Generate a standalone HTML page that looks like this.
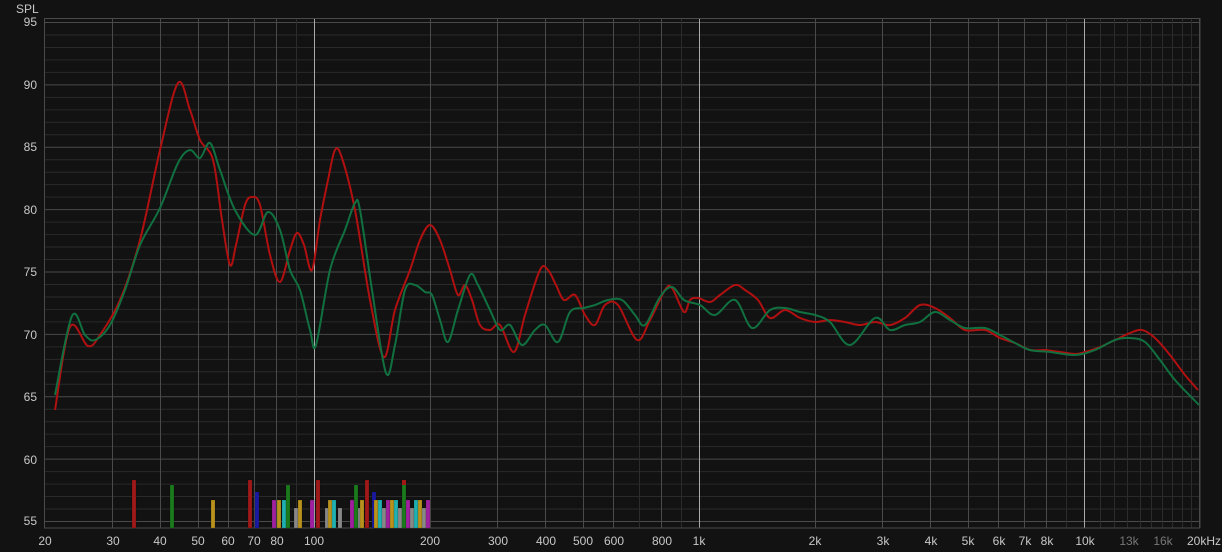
<!DOCTYPE html>
<html><head><meta charset="utf-8"><style>
html,body{margin:0;padding:0;background:#121212;}
body{width:1222px;height:552px;position:relative;overflow:hidden;font-family:"Liberation Sans",sans-serif;}
.l{position:absolute;color:#c8c8c8;font-size:12px;line-height:12px;}
.y{right:1185px;text-align:right;}
.x{top:535px;transform:translateX(-50%);}
.g{color:#777;}
svg{position:absolute;left:0;top:0;}
</style></head><body>
<svg id="s" width="1222" height="552"></svg>
<div class="l" style="left:16px;top:3px;font-size:12px">SPL</div>
<div class="l y" style="top:16px">95</div>
<div class="l y" style="top:79px">90</div>
<div class="l y" style="top:141px">85</div>
<div class="l y" style="top:204px">80</div>
<div class="l y" style="top:266px">75</div>
<div class="l y" style="top:329px">70</div>
<div class="l y" style="top:391px">65</div>
<div class="l y" style="top:454px">60</div>
<div class="l y" style="top:515px">55</div>
<div class="l x" style="left:45px">20</div>
<div class="l x" style="left:113px">30</div>
<div class="l x" style="left:160px">40</div>
<div class="l x" style="left:198px">50</div>
<div class="l x" style="left:228px">60</div>
<div class="l x" style="left:254px">70</div>
<div class="l x" style="left:277px">80</div>
<div class="l x" style="left:314px">100</div>
<div class="l x" style="left:430px">200</div>
<div class="l x" style="left:498px">300</div>
<div class="l x" style="left:546px">400</div>
<div class="l x" style="left:583px">500</div>
<div class="l x" style="left:614px">600</div>
<div class="l x" style="left:662px">800</div>
<div class="l x" style="left:699px">1k</div>
<div class="l x" style="left:815px">2k</div>
<div class="l x" style="left:883px">3k</div>
<div class="l x" style="left:931px">4k</div>
<div class="l x" style="left:968px">5k</div>
<div class="l x" style="left:999px">6k</div>
<div class="l x" style="left:1025px">7k</div>
<div class="l x" style="left:1047px">8k</div>
<div class="l x" style="left:1085px">10k</div>
<div class="l x g" style="left:1129px">13k</div>
<div class="l x g" style="left:1163px">16k</div>
<div class="l x" style="left:1204px">20kHz</div>
<script>
var s=document.getElementById('s'),ns='http://www.w3.org/2000/svg',h='';
function X(f){return 44.5+(Math.log10(f)-Math.log10(20))*385;}
function Y(d){return 521.5-(d-55)*12.475;}
// horizontal grid
for(var d=55;d<=95;d++){var y=Y(d);h+='<line x1="44" x2="1200" y1="'+y+'" y2="'+y+'" stroke="'+(d%5==0?'#4a4a4a':'#2a2a2a')+'" stroke-width="1"/>';}
// vertical grid
var fs=[],maj=[20,30,40,50,60,70,80,200,300,400,500,600,800,2000,3000,4000,5000,6000,7000,8000];
for(var f=30;f<100;f+=10)fs.push(f);for(f=200;f<1000;f+=100)fs.push(f);for(f=2000;f<10000;f+=1000)fs.push(f);for(f=11000;f<=20000;f+=1000)fs.push(f);
fs.forEach(function(f){var x=Math.round(X(f))+.5;var c=maj.indexOf(f)>=0?'#4a4a4a':'#2c2c2c';h+='<line x1="'+x+'" x2="'+x+'" y1="18" y2="528" stroke="'+c+'"/>';});
[100,1000,10000].forEach(function(f){var x=Math.round(X(f))+.5;h+='<line x1="'+x+'" x2="'+x+'" y1="18" y2="528" stroke="#aaa"/>';});
h+='<rect x="44.5" y="18.5" width="1155" height="509.5" fill="none" stroke="#4a4a4a"/>';
// bars
var B=[[132,'#a01818',480],[170,'#1b7a1b',485],[211,'#b8921c',500],[248,'#a01818',480],[255,'#1a1aa0',492],
[272,'#a020a0',500],[277,'#b8921c',500],[282,'#20b0b0',500],[286,'#1b7a1b',485],[294,'#888',508],[298,'#b8921c',500],
[310,'#a020a0',500],[316,'#a01818',480],[325,'#888',508],[328,'#b8921c',500],[332,'#20b0b0',500],[338,'#888',508],
[350,'#a020a0',500],[354,'#1b7a1b',485],[358,'#888',508],[360,'#b8921c',500],[365,'#a01818',480],[372,'#1a1aa0',492],
[374,'#b8921c',500],[378,'#20b0b0',500],[382,'#888',508],[386,'#a020a0',500],[390,'#b8921c',500],[394,'#20b0b0',500],[398,'#888',508],
[402,'#1b7a1b',480],[406,'#a020a0',500],[410,'#888',508],[414,'#20b0b0',500],[418,'#b8921c',500],[422,'#888',508],[426,'#a020a0',500]];
B.forEach(function(b){h+='<rect x="'+b[0]+'" y="'+b[2]+'" width="4" height="'+(528-b[2])+'" fill="'+b[1]+'" stroke="rgba(0,0,0,.3)" stroke-width=".5"/>';});
h+='<rect x="402" y="480" width="4" height="5" fill="#a01818"/>';
function cr(p){var d='M'+p[0][0]+' '+p[0][1];for(var i=0;i<p.length-1;i++){var a=p[i-1]||p[i],b=p[i],c=p[i+1],e=p[i+2]||c;
d+=' C'+(b[0]+(c[0]-a[0])/6).toFixed(1)+' '+(b[1]+(c[1]-a[1])/6).toFixed(1)+' '+(c[0]-(e[0]-b[0])/6).toFixed(1)+' '+(c[1]-(e[1]-b[1])/6).toFixed(1)+' '+c[0]+' '+c[1];}return d;}
var R=[[55,410],[70,327],[88,346],[100,335],[120,300],[140,240],[160,150],[178,83],[190,110],[200,140],[213,160],[222,220],[230,265],[236,245],[245,205],[252,197],[260,205],[270,255],[280,282],[290,250],[297,233],[304,245],[312,270],[320,220],[328,180],[335,150],[342,158],[355,210],[370,300],[384,357],[395,310],[410,270],[420,240],[430,225],[440,240],[450,270],[458,295],[465,285],[472,300],[480,325],[490,330],[500,325],[514,352],[525,315],[540,270],[548,270],[556,285],[564,300],[575,295],[585,315],[595,325],[605,305],[618,305],[637,340],[650,320],[665,290],[672,288],[684,312],[690,300],[698,298],[710,302],[720,295],[735,285],[745,290],[758,300],[770,318],[785,310],[800,318],[815,322],[830,320],[845,322],[860,325],[875,322],[890,325],[905,318],[920,305],[935,308],[950,318],[965,330],[985,330],[1000,338],[1015,343],[1030,350],[1045,350],[1060,352],[1075,354],[1085,352],[1100,347],[1115,340],[1130,333],[1142,330],[1155,338],[1170,355],[1185,375],[1198,390]];
var G=[[55,395],[72,316],[85,335],[95,340],[110,325],[125,290],[140,245],[160,208],[178,163],[190,150],[200,158],[210,143],[220,170],[235,210],[255,235],[268,212],[280,230],[290,270],[300,290],[310,330],[316,345],[330,270],[345,230],[355,203],[360,210],[372,290],[386,373],[395,345],[405,290],[415,285],[425,292],[432,295],[440,320],[448,342],[458,310],[470,275],[478,285],[490,310],[500,330],[510,325],[522,345],[535,330],[545,325],[558,342],[570,312],[584,308],[595,305],[608,300],[622,300],[635,315],[645,325],[660,297],[672,287],[684,300],[700,305],[715,315],[735,300],[752,328],[770,310],[785,308],[800,312],[815,315],[830,322],[850,345],[875,318],[890,330],[905,325],[920,322],[935,312],[950,320],[965,328],[985,328],[1000,335],[1015,343],[1030,350],[1050,352],[1075,355],[1095,350],[1115,340],[1130,338],[1145,342],[1160,360],[1175,380],[1199,405]];
h+='<path d="'+cr(R)+'" fill="none" stroke="#b01010" stroke-width="2"/>';
h+='<path d="'+cr(G)+'" fill="none" stroke="#117040" stroke-width="2"/>';
s.innerHTML=h;
</script>
</body></html>
